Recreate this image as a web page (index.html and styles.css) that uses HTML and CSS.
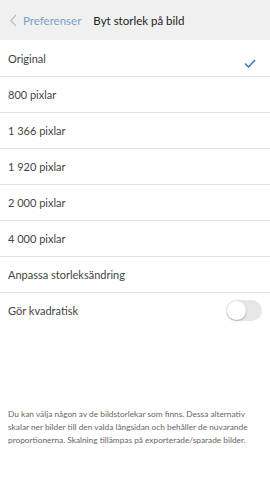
FILE: index.html
```html
<!DOCTYPE html>
<html lang="sv">
	<head>
		<meta charset="UTF-8" />
		<meta name="viewport" content="width=device-width, initial-scale=1.0" />
		<title>Byt storlek på bild</title>
		<link rel="stylesheet" href="styles.css">
	</head>
	<body>
		<!-- Header: Begin -->
		<div class="header">
			<span class="back">
				<svg width="7" height="13" viewBox="0 0 7 13"><path d="M6 1 L1 6.5 L6 12" fill="none" stroke="#a9b4bf" stroke-width="1.1"/></svg>
				Preferenser
			</span>
			<span class="title">Byt storlek på bild</span>
		</div>
		<!-- Header: End -->

		<ul class="list">
			<li class="row">Original
				<svg class="check" width="12" height="9" viewBox="0 0 12 9"><path d="M1 4.5 L4.5 8 L11 1" fill="none" stroke="#3f7fc1" stroke-width="1.6"/></svg>
			</li>
			<li class="row">800 pixlar</li>
			<li class="row">1 366 pixlar</li>
			<li class="row">1 920 pixlar</li>
			<li class="row">2 000 pixlar</li>
			<li class="row">4 000 pixlar</li>
			<li class="row">Anpassa storleksändring</li>
			<li class="row last">Gör kvadratisk
				<span class="toggle"><span class="knob"></span></span>
			</li>
		</ul>

		<p class="note">Du kan välja någon av de bildstorlekar som finns. Dessa alternativ skalar ner bilder till den valda långsidan och behåller de nuvarande proportionerna. Skalning tillämpas på exporterade/sparade bilder.</p>
	</body>
</html>
```

FILE: styles.css
```css
body {
	margin: 0;
	background: #fff;
	font-family: "Lato", "Open Sans", sans-serif;
	color: #333;
}

.header {
	height: 40px;
	background: #f0f0f0;
	display: flex;
	align-items: center;
	padding-left: 10px;
	font-size: 11.5px;
}

.back {
	display: flex;
	align-items: center;
	gap: 6px;
	color: #79a2c8;
}

.title {
	margin-left: 12px;
	color: #222;
}

.list {
	list-style: none;
	margin: 0;
	padding: 0;
}

.row {
	height: 35px;
	border-bottom: 1px solid #e3e3e3;
	display: flex;
	align-items: center;
	justify-content: space-between;
	padding: 0 8px;
	font-size: 11px;
	color: #444;
}

.row:first-child {
	height: 36px;
}

.row.last {
	border-bottom: 0;
}

.check {
	margin-top: 10px;
	margin-right: 6px;
}

.toggle {
	position: relative;
	width: 36px;
	height: 21px;
	border-radius: 11px;
	background: #e6e6e6;
}

.knob {
	position: absolute;
	left: 1px;
	top: 1px;
	width: 19px;
	height: 19px;
	border-radius: 50%;
	background: #fff;
	box-shadow: 0 1px 2px rgba(0, 0, 0, 0.25);
}

.note {
	margin: 80px 8px 0;
	font-size: 8.3px;
	line-height: 13px;
	color: #666;
}
```
